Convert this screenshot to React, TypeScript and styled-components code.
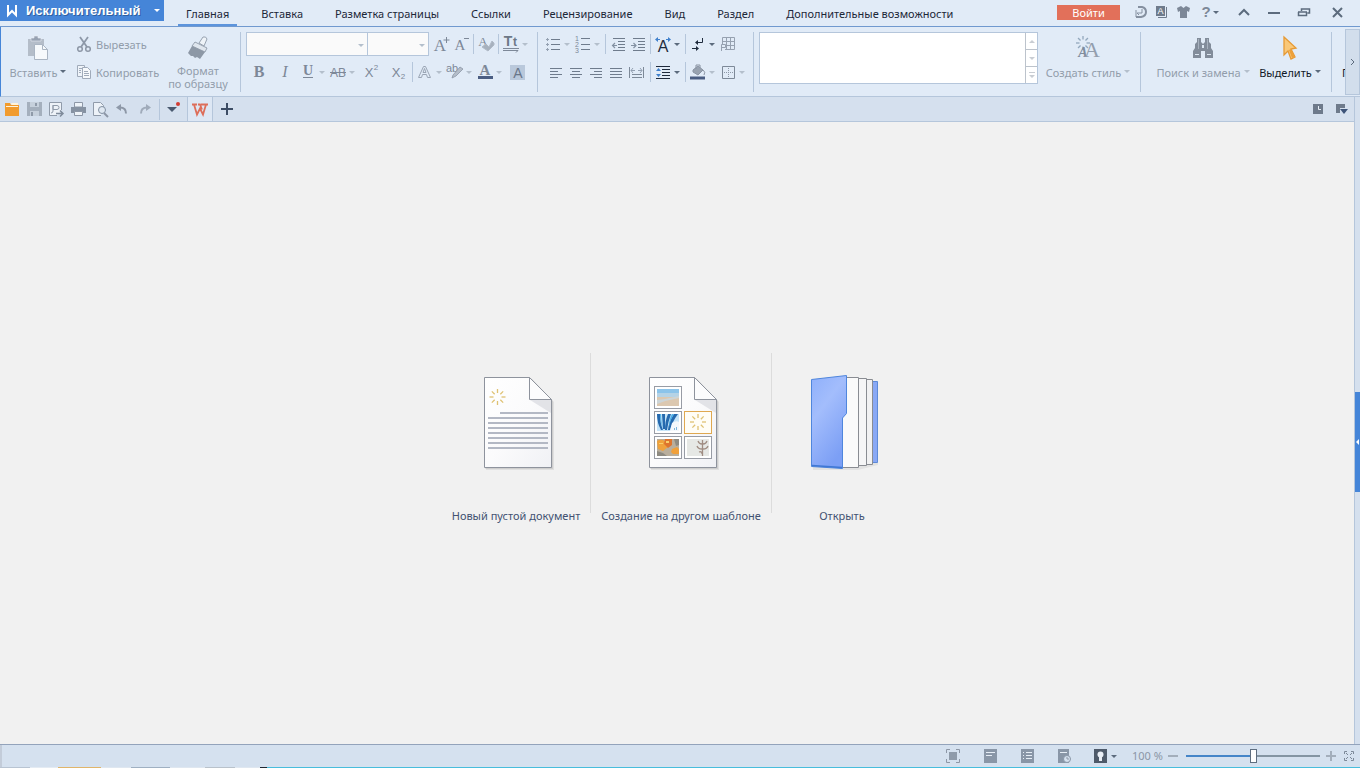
import React from 'react';
import styled, { createGlobalStyle, css } from 'styled-components';

const GlobalStyle = createGlobalStyle`
  *, *::before, *::after { box-sizing: border-box; }
  body { margin: 0; background: #f1f1f1; }
  body, button, input, select {
    font-family: 'Noto Sans', 'Open Sans', sans-serif;
    font-size: 11px;
  }
  button {
    margin: 0;
    padding: 0;
    border: 0;
    background: none;
    color: inherit;
    cursor: pointer;
  }
`;

const muted = '#8d97a6';
const faint = '#b4bfcc';
const dark = '#5c6b7d';
const ink = '#1f2b3d';
const blue = '#4585d8';
const line = '#b5c6db';

const Window = styled.div`
  display: flex;
  flex-direction: column;
  min-height: 100vh;
  overflow: hidden;
`;

const Glyph = styled.svg`
  display: block;
  flex: none;
  overflow: visible;
`;

/* ---------- title bar ---------- */

const TitleBar = styled.header`
  display: flex;
  height: 27px;
  background: #e1ebf7;
  border-bottom: 1px solid #7099cf;
`;

const AppButton = styled.button`
  display: flex;
  align-items: center;
  width: 164px;
  height: 21px;
  padding: 0 4px 0 6px;
  background: ${blue};
  color: #fff;
  font-family: 'Liberation Sans', Arial, sans-serif;
  font-size: 13px;
  font-weight: bold;
  text-shadow: 1px 1px 0 #2f5f9f;
`;

const AppName = styled.span`
  flex: 1;
  padding-left: 8px;
  text-align: left;
`;

const Tabs = styled.nav`
  display: flex;
  gap: 16px;
  margin-left: 14px;
`;

const Tab = styled.button<{ $active?: boolean }>`
  height: 26px;
  padding: 2px 8px 0;
  color: #1c2738;
  white-space: nowrap;
  border-bottom: 2px solid ${(p) => (p.$active ? '#5c94dc' : 'transparent')};
`;

const TitleTools = styled.div`
  display: flex;
  align-items: center;
  height: 24px;
  margin-left: auto;
  padding-right: 8px;
`;

const SignIn = styled.button`
  width: 63px;
  height: 15px;
  margin-right: 10px;
  background: #e2705a;
  color: #fff;
  line-height: 15px;
`;

const TitleButton = styled.button<{ $w: number }>`
  display: flex;
  align-items: center;
  justify-content: center;
  gap: 3px;
  width: ${(p) => p.$w}px;
  height: 20px;
`;

/* ---------- ribbon ---------- */

const Ribbon = styled.section`
  display: flex;
  height: 70px;
  padding-top: 5px;
  background: #e1ebf7;
  border-left: 1px solid ${blue};
  border-bottom: 1px solid ${line};
`;

const Group = styled.div<{ $w?: number; $left?: number }>`
  display: flex;
  flex: ${(p) => (p.$w ? `0 0 ${p.$w}px` : '1 1 auto')};
  height: 60px;
  padding-left: ${(p) => p.$left ?? 5}px;
  border-right: 1px solid ${line};
`;

const StylesGroup = styled(Group)`
  padding-right: 8px;
`;

const Rows = styled.div`
  display: flex;
  flex-direction: column;
  gap: 4px;
`;

const Row = styled.div<{ $indent?: number }>`
  display: flex;
  align-items: center;
  height: 24px;
  padding-left: ${(p) => p.$indent ?? 0}px;
`;

const ToolButton = styled.button<{ $w: number; $menu?: boolean }>`
  display: flex;
  align-items: center;
  justify-content: center;
  width: ${(p) => p.$w}px;
  height: 22px;
  ${(p) =>
    p.$menu &&
    css`
      justify-content: flex-start;
      gap: 3px;
      padding-left: 2px;
    `}
`;

const Rule = styled.span`
  width: 1px;
  height: 20px;
  margin: 0 2px;
  background: ${line};
`;

const BigButton = styled.button<{ $w: number; $strong?: boolean }>`
  display: flex;
  flex-direction: column;
  align-items: center;
  flex: none;
  width: ${(p) => p.$w}px;
  padding-top: 2px;
  color: ${(p) => (p.$strong ? '#111a28' : '#929dab')};
  line-height: 13px;
`;

const BigIcon = styled.span<{ $tight?: boolean }>`
  display: flex;
  align-items: center;
  height: 28px;
  margin-bottom: ${(p) => (p.$tight ? 2 : 4)}px;
`;

const BigLabel = styled.span`
  display: flex;
  align-items: center;
  gap: 3px;
  white-space: nowrap;
  svg { margin-bottom: 3px; }
`;

const ClipColumn = styled(Rows)`
  width: 91px;
  padding-left: 8px;
`;

const ClipButton = styled.button`
  display: flex;
  align-items: center;
  gap: 4px;
  height: 24px;
  color: #929dab;
`;

const Combo = styled.label<{ $w: number }>`
  position: relative;
  display: block;
  width: ${(p) => p.$w}px;
  height: 24px;
  & + & { margin-left: -1px; }
  & > svg {
    position: absolute;
    right: 4px;
    top: 12px;
    pointer-events: none;
  }
`;

const ComboField = styled.select`
  display: block;
  width: 100%;
  height: 24px;
  appearance: none;
  background: #fafafa;
  border: 1px solid ${line};
  border-radius: 0;
`;

const Combos = styled.div`
  display: flex;
  margin-right: 2px;
`;

const Gallery = styled.div`
  display: flex;
  flex: 1;
  height: 52px;
  margin-right: 6px;
  background: #fff;
  border: 1px solid ${line};
`;

const GalleryScroll = styled.div`
  display: flex;
  flex-direction: column;
  width: 12px;
  margin-left: auto;
  border-left: 1px solid #bcc3cc;
`;

const GalleryButton = styled.button`
  display: flex;
  flex: 1;
  align-items: center;
  justify-content: center;
  & + & { border-top: 1px solid #bcc3cc; }
`;

const Clipped = styled.div`
  flex: 0 0 13px;
  padding: 34px 0 0 10px;
  overflow: hidden;
  color: #111a28;
  line-height: 13px;
`;

const RibbonScroll = styled.button`
  flex: 0 0 15px;
  height: 66px;
  margin-top: -3px;
  display: flex;
  align-items: center;
  justify-content: center;
  background: #d2deec;
  border: 1px solid ${line};
`;

/* ---------- quick access ---------- */

const Body = styled.div`
  display: flex;
  flex: 1;
`;

const Content = styled.div`
  display: flex;
  flex: 1;
  flex-direction: column;
`;

const QuickBar = styled.div`
  display: flex;
  align-items: center;
  height: 25px;
  padding-left: 1px;
  background: #d5e0ee;
  border-bottom: 1px solid ${line};
`;

const QuickButton = styled.button<{ $w?: number; $tab?: boolean }>`
  display: flex;
  align-items: center;
  justify-content: center;
  width: ${(p) => p.$w ?? 22}px;
  height: 24px;
  ${(p) =>
    p.$tab &&
    css`
      background: #dde7f4;
      border: solid ${line};
      border-width: 0 1px;
    `}
`;

const QuickRule = styled.span`
  width: 1px;
  height: 21px;
  margin-left: 2px;
  background: ${line};
`;

const QuickEnd = styled.div`
  display: flex;
  margin-left: auto;
`;

/* ---------- start area ---------- */

const Workspace = styled.main`
  display: flex;
  flex: 1;
  align-items: center;
  justify-content: center;
  padding-top: 14px;
  background: #f1f1f1;
`;

const Start = styled.div`
  display: flex;
  align-items: flex-start;
`;

const Divider = styled.span`
  width: 1px;
  height: 160px;
  background: #dcdcdc;
`;

const Card = styled.button<{ $w: number }>`
  display: flex;
  flex-direction: column;
  align-items: center;
  gap: 38px;
  width: ${(p) => p.$w}px;
  height: 174px;
  padding-top: 17px;
  color: #435272;
  line-height: 16px;
  white-space: nowrap;
`;

const Rail = styled.aside`
  display: flex;
  flex-direction: column;
  justify-content: center;
  width: 6px;
  padding-top: 43px;
  background: #d5e0ee;
  border-left: 1px solid ${line};
`;

const RailHandle = styled.button`
  display: flex;
  align-items: center;
  justify-content: center;
  width: 5px;
  height: 100px;
  background: ${blue};
`;

/* ---------- status bar ---------- */

const StatusBar = styled.footer`
  display: flex;
  align-items: center;
  height: 23px;
  background: #d5e1ef;
  border-top: 1px solid #93a3bb;
  box-shadow: inset 2px 0 0 #c3ccd9;
`;

const StatusTools = styled.div`
  display: flex;
  align-items: center;
  margin-left: auto;
`;

const StatusButton = styled.button<{ $w: number }>`
  display: flex;
  align-items: center;
  justify-content: center;
  gap: 4px;
  width: ${(p) => p.$w}px;
  height: 20px;
`;

const Percent = styled.output`
  width: 36px;
  padding: 0 0 2px 4px;
  color: #8b96a6;
  white-space: nowrap;
`;

const Zoom = styled.input`
  appearance: none;
  width: 134px;
  height: 14px;
  margin: 0 4px;
  background: linear-gradient(#4585c8, #4585c8) left center / 67px 2px no-repeat,
    linear-gradient(#8495a3, #8495a3) center / 100% 2px no-repeat;
  &::-webkit-slider-thumb {
    appearance: none;
    width: 7px;
    height: 14px;
    background: #fff;
    border: 1px solid #5f6e80;
  }
`;

const Taskbar = styled.div`
  flex: none;
  height: 1px;
  background: linear-gradient(90deg, #b8c4d2 0 30px, #e4ebf3 30px 58px, #e0b56a 58px 101px, #dfe7f0 101px 131px,
    #9fb0c2 131px 170px, #dfe7f0 170px 205px, #b9c2cb 205px 235px, #dfe7f0 235px 260px, #1d2733 260px 267px,
    #48bddc 267px 100%);
`;

/* ---------- drawings ---------- */

const Down = ({ c = faint, w = 6 }: { c?: string; w?: number }) => (
  <Glyph width={w} height="3" viewBox="0 0 6 3"><path d="M0 0h6L3 3z" fill={c} /></Glyph>
);

type IconProps = { children: React.ReactNode; w?: number; h?: number };
const Icon = ({ children, w = 16, h = 16 }: IconProps) => (
  <Glyph width={w} height={h} viewBox={`0 0 ${w} ${h}`} fill="none" stroke={muted}>{children}</Glyph>
);

type LetterProps = { x: number; y: number; s: number; t: string; c?: string; serif?: boolean; bold?: boolean; italic?: boolean };
const Letter = ({ x, y, s, t, c = '#7d8898', serif, bold, italic }: LetterProps) => (
  <text
    x={x}
    y={y}
    fontSize={s}
    fill={c}
    stroke="none"
    textAnchor="middle"
    fontWeight={bold ? 'bold' : 'normal'}
    fontStyle={italic ? 'italic' : 'normal'}
    fontFamily={serif ? "'Liberation Serif', serif" : "'Liberation Sans', sans-serif"}
  >
    {t}
  </text>
);

const Lines = ({ rows, c = '#6f7c8d' }: { rows: number[][]; c?: string }) => (
  <path stroke={c} d={rows.map(([y, a, b]) => `M${a} ${y + 0.5}H${b}`).join('')} />
);

const Spark = ({ x, y, c = '#dfc273', r = 8 }: { x: number; y: number; c?: string; r?: number }) => (
  <g stroke={c} strokeWidth="1.300">
    {[0, 45, 90, 135, 180, 225, 270, 315].map((a) => (
      <path key={a} d={`M${r / 2} 0H${r}`} transform={`translate(${x} ${y}) rotate(${a})`} />
    ))}
  </g>
);

const Sheet = () => (
  <>
    <path d="M20 9h46l22 23v68H20z" fill="#000" opacity=".07" stroke="none" />
    <path d="M19 8h46l22 23v68H19z" fill="#000" opacity=".08" stroke="none" />
    <path d="M18.5 7.500h45l22 22v68h-67z" fill="url(#sheet)" stroke="#8e939d" />
    <path d="M64 30h21v13z" fill="#dcdde2" opacity=".8" stroke="none" />
    <path d="M63.500 7.500v22h22z" fill="#fcfcfd" stroke="#8e939d" />
  </>
);

const Gradients = () => (
  <defs>
    <linearGradient id="sheet" x1="0" y1="0" x2="1" y2="1">
      <stop offset="0" stopColor="#fff" />
      <stop offset=".5" stopColor="#fbfbfc" />
      <stop offset="1" stopColor="#f0f1f5" />
    </linearGradient>
    <linearGradient id="cover" x1="0" y1="0" x2=".5" y2="1">
      <stop offset="0" stopColor="#8fb0fb" />
      <stop offset=".4" stopColor="#a3bdfc" />
      <stop offset="1" stopColor="#7c9ff5" />
    </linearGradient>
  </defs>
);

const BlankDocument = () => (
  <Icon w={100} h={100}>
    <Gradients />
    <Sheet />
    <Spark x={31.5} y={27} />
    <path stroke="#b3b8c4" strokeWidth="2" d="M34 43h48M22 48h60M22 53h60M22 58h60M22 63h60M22 68h60M22 73h60M22 78h60" />
  </Icon>
);

const TemplateDocument = () => (
  <Icon w={100} h={100}>
    <Sheet />
    {[[23, 16], [23, 41], [23, 66], [53, 66]].map(([x, y]) => (
      <rect key={`${x}-${y}`} x={x + 0.5} y={y + 0.5} width="27" height="22" fill="#fff" stroke="#989ca5" />
    ))}
    <rect x="53.500" y="41.500" width="27" height="22" fill="#fffdf6" stroke="#dfa850" />
    <g stroke="none">
      <path d="M26 19h22v6H26z" fill="#8cc4ea" />
      <path d="M26 23h22v5H26z" fill="#b5d3e6" />
      <path d="M26 27h22v9H26z" fill="#dcc8b0" />
      <path d="M26 30q10-1 22-4v2q-12 2-22 6z" fill="#cdd5d7" />
      <path d="M26 44h22v17H26z" fill="#c5e4f8" />
      <path d="M26 44h3q0 9 3 16h-2q-4-7-4-16zM31 44h3v15h-2zM37 44h3q-3 8-4 16h-2q0-9 3-16zM43 44h4q-6 8-8 16h-2q1-9 6-16z" fill="#2569ae" />
      <path d="M29 44h1q0 8 2 14-3-6-3-14zM41 44h2q-4 6-5 13 0-8 3-13z" fill="#4fb1e8" />
      <path d="M41 53q4-3 7-1v9h-9z" fill="#f4f8fb" />
      <path d="M43 58h1v2h-1zM45 57h1v3h-1z" fill="#7fb6dc" />
      <path d="M26 69h22v17H26z" fill="#b9ae9c" />
      <path d="M26 71q5-3 9 1l2 5-5 4-5-2z" fill="#f0a23c" />
      <path d="M34 69h7v6l-4 3-4-4z" fill="#de742d" />
      <path d="M41 79l5-2 2 2v5h-6l-2-2z" fill="#f0a03a" />
      <path d="M43 69h5v6l-3 1zM26 81l6 2 4 3H26z" fill="#8e8b82" />
      <path d="M28 73h4v1h-4zM35 71h3v2h-3z" fill="#f8cf6a" />
      <path d="M56 69h22v17H56z" fill="#e6e8e5" />
    </g>
    <path d="M71.500 70v16M67 71q1 3 4 3M76 71q-1 3-4 3M66 76q1 3 5 3M77 76q-1 3-5 3M68 82q3-1 3 2" stroke="#a08d83" strokeWidth="1.300" />
    <Spark x={67} y={52} />
  </Icon>
);

const OpenFolder = () => (
  <Icon w={100} h={100}>
    <path d="M21 100h45l20-5v-4H21z" fill="#000" opacity=".06" stroke="none" />
    <path d="M78 11.500h7.500v81H78z" fill="#89a8f5" stroke="#5d8ad8" />
    <path d="M72 9.500h8.500v85H72z" fill="#f1f1f2" stroke="#898c92" />
    <path d="M64 8.500h10.500v87H64z" fill="#f5f5f6" stroke="#898c92" />
    <path d="M50 7.500h16.500v90H50z" fill="#fafafa" stroke="#898c92" />
    <path d="M19.500 9.500l35-4v38l-4 4.500v50.500l-31-2z" fill="url(#cover)" stroke="#4f86dd" />
    <path d="M20 95.500l30 2" stroke="#3f78d4" strokeWidth="1.500" />
  </Icon>
);

const Paste = () => (
  <Icon w={22} h={24}>
    <path d="M1 3h16v17H1z" fill="#b4bdc9" stroke="none" />
    <path d="M4 5h10V2h-3V0H7v2H4z" fill="#97a2b2" stroke="#e9eef5" strokeWidth=".6" />
    <path d="M7.500 8.500h8l5 5v10h-13z" fill="#f6f9fc" stroke="#aab5c3" />
    <path d="M15.500 8.500v5h5" stroke="#aab5c3" />
  </Icon>
);

const Scissors = () => (
  <Icon w={16} h={17}>
    <path d="M4 1l7 10M12 1L5 11" stroke="#8d98a8" strokeWidth="1.800" />
    <circle cx="4" cy="13" r="2.300" strokeWidth="1.500" />
    <circle cx="12" cy="13" r="2.300" strokeWidth="1.500" />
  </Icon>
);

const Copy = () => (
  <Icon>
    <path d="M1.500 1.500h7v11h-7z" fill="#eff4fa" stroke="#a0abba" />
    <path d="M6.500 3.500h5l3 3v8h-8z" fill="#f6f9fc" stroke="#a0abba" />
    <path d="M3 4.500h3M3 6.500h2M3 8.500h2M8 7.500h4M8 9.500h5M8 11.500h5" stroke="#a0abba" />
  </Icon>
);

const Brush = () => (
  <Icon w={22} h={24}>
    <path d="M12 7l4-6q3-1 4 2l-3 7z" fill="#eef3f8" stroke="#97a2b0" />
    <path d="M8 6l12 6-2 4L5 10z" fill="#dfe6ee" stroke="#97a2b0" />
    <path d="M5 10l13 6-5 7-3-2-2 1-2-2-2 0-3-3z" fill="#8d98a6" stroke="none" />
  </Icon>
);

const NewStyle = () => (
  <Icon w={24} h={24}>
    <Spark x={7} y={7} c="#93a8bd" r={7} />
    <Letter x={7} y={21} s={14} t="A" serif bold italic c="#7f8c9d" />
    <Letter x={16} y={21} s={22} t="A" serif c="#939eae" />
  </Icon>
);

const Binoculars = () => (
  <Icon w={22} h={22}>
    <g fill="#828c9a" stroke="none">
      <path d="M5 1h4v4l2 2 2-2V1h4v4l2 2v4l2 3v7h-8v-7H9v7H1v-7l2-3V7l2-2z" />
      <path d="M10 8h2v3h-2zM3 17h4v1H3zM15 17h4v1h-4z" fill="#dce6f1" />
      <path d="M6 2h1v10H6zM15 2h1v10h-1z" fill="#a7b1be" />
    </g>
  </Icon>
);

const Cursor = () => (
  <Icon w={16} h={24}>
    <path d="M2 1l12 11-5 1 4 8-4 2-3-8-4 4z" fill="#f9c879" stroke="#e69a35" strokeWidth="1.300" />
    <path d="M9 13l4 8-3 1-3-8z" fill="#eda03a" stroke="none" />
  </Icon>
);

const Align = ({ kind }: { kind: 'left' | 'center' | 'right' | 'justify' }) => {
  const rows = {
    left: [[4, 2, 14], [7, 2, 10], [10, 2, 14], [13, 2, 10]],
    center: [[4, 2, 14], [7, 4, 12], [10, 2, 14], [13, 4, 12]],
    right: [[4, 2, 14], [7, 6, 14], [10, 2, 14], [13, 6, 14]],
    justify: [[4, 2, 14], [7, 2, 14], [10, 2, 14], [13, 2, 14]],
  }[kind];
  return <Icon><Lines rows={rows} /></Icon>;
};

const Indent = ({ out }: { out?: boolean }) => (
  <Icon>
    <Lines rows={[[2, 3, 15], [5, 8, 15], [8, 8, 15], [11, 8, 15], [14, 3, 15]]} />
    <path d={out ? 'M7 9.500H2M5 7L2.500 9.500 5 12' : 'M1 9.500h5M3.500 7L6 9.500 3.500 12'} stroke="#8391a3" strokeWidth="1.200" />
  </Icon>
);

/* ---------- page ---------- */

const TABS = ['Главная', 'Вставка', 'Разметка страницы', 'Ссылки', 'Рецензирование', 'Вид', 'Раздел', 'Дополнительные возможности'];

const Tool = ({ label, w = 20, menu, children }: { label: string; w?: number; menu?: string; children: React.ReactNode }) => (
  <ToolButton aria-label={label} $w={menu ? 30 : w} $menu={!!menu}>
    {children}
    {menu && <Down c={menu} />}
  </ToolButton>
);

const FontGroup = () => (
  <Group $w={297}>
    <Rows>
      <Row>
        <Combos>
          <Combo $w={122}><ComboField aria-label="Шрифт" /><Down /></Combo>
          <Combo $w={62}><ComboField aria-label="Размер шрифта" /><Down /></Combo>
        </Combos>
        <Tool label="Увеличить шрифт">
          <Icon><Letter x={7} y={15} s={17} t="A" serif /><path d="M13.500 1v6M10.500 4h6" stroke="#7d8898" /></Icon>
        </Tool>
        <Tool label="Уменьшить шрифт">
          <Icon><Letter x={7} y={14} s={15} t="A" serif /><path d="M11 2.500h5" stroke="#7d8898" /></Icon>
        </Tool>
        <Rule />
        <Tool label="Очистить формат">
          <Icon>
            <Letter x={5} y={10} s={13} t="A" serif />
            <path d="M4 11l4-3 3 3 3-6 2 2v2l-6 6z" fill="#a7b1be" stroke="#b0bac7" />
          </Icon>
        </Tool>
        <Rule />
        <Tool label="Регистр" menu={faint}>
          <Icon>
            <Letter x={5} y={10} s={14} t="T" bold c="#6d7887" />
            <Letter x={12} y={10} s={12} t="t" bold c="#6d7887" />
            <path d="M0 12.500h16M0 14.500h15l-2 2" stroke="#7d8898" />
          </Icon>
        </Tool>
      </Row>
      <Row>
        <Tool label="Полужирный" w={26}><Icon><Letter x={8} y={13} s={16} t="B" serif bold /></Icon></Tool>
        <Tool label="Курсив" w={26}><Icon><Letter x={8} y={13} s={16} t="I" serif italic /></Icon></Tool>
        <Tool label="Подчёркнутый" menu={faint}>
          <Icon><Letter x={8} y={11} s={14} t="U" serif bold /><path d="M3 13.500h10" stroke="#7d8898" /></Icon>
        </Tool>
        <Tool label="Зачёркнутый" menu={faint}>
          <Icon><Letter x={8} y={13} s={12} t="AB" /><path d="M0 8.500h16" stroke="#7d8898" /></Icon>
        </Tool>
        <Tool label="Надстрочный" w={26}>
          <Icon><Letter x={6} y={13} s={13} t="X" /><Letter x={13} y={6} s={8} t="2" /></Icon>
        </Tool>
        <Tool label="Подстрочный" w={26}>
          <Icon><Letter x={7} y={13} s={13} t="X" /><Letter x={14} y={15} s={8} t="2" /></Icon>
        </Tool>
        <Rule />
        <Tool label="Эффекты" menu={faint}>
          <Icon>
            <path d="M1.500 13.500l5-11h2l5 11h-3l-1-3h-4l-1 3zM6 8.500h3l-1.500-4z" stroke="#9aa5b4" />
          </Icon>
        </Tool>
        <Tool label="Цвет выделения" menu={faint}>
          <Icon>
            <Letter x={5} y={8} s={11} t="ab" />
            <path d="M6 11l7-8 3 2-7 7-4 2z" fill="#b4bdc9" stroke="#8d97a6" strokeWidth=".8" />
          </Icon>
        </Tool>
        <Tool label="Цвет текста" menu={faint}>
          <Icon><Letter x={8} y={11} s={15} t="A" serif bold /><path d="M1 13.500h15" stroke="#4a5d82" strokeWidth="3" /></Icon>
        </Tool>
        <Tool label="Заливка текста" w={26}>
          <Icon><path d="M0 1h15v15H0z" fill="#b9c8db" stroke="none" /><Letter x={8} y={14} s={14} t="A" c="#697689" /></Icon>
        </Tool>
      </Row>
    </Rows>
  </Group>
);

const ParagraphGroup = () => (
  <Group $w={216}>
    <Rows>
      <Row>
        <Tool label="Маркеры" menu={faint}>
          <Icon>
            <Lines rows={[[3, 6, 15], [8, 6, 15], [13, 6, 15]]} />
            <path d="M1 3.500h3M1 8.500h3M1 13.500h3M2.500 2v3M2.500 7v3M2.500 12v3" stroke="#94a1b2" />
          </Icon>
        </Tool>
        <Tool label="Нумерация" menu={faint}>
          <Icon>
            <Lines rows={[[2, 6, 15], [8, 6, 15], [13, 6, 15]]} />
            <Letter x={2} y={5} s={7} t="1" /><Letter x={2} y={11} s={7} t="2" /><Letter x={2} y={17} s={7} t="3" />
          </Icon>
        </Tool>
        <Rule />
        <Tool label="Уменьшить отступ"><Indent out /></Tool>
        <Tool label="Увеличить отступ"><Indent /></Tool>
        <Rule />
        <Tool label="Масштаб знаков" menu={dark}>
          <Icon>
            <Letter x={8} y={16} s={16} t="A" c={ink} />
            <path d="M1 3.500h4M11 3.500h4" stroke="#3f80cc" />
            <path d="M0 3.500L3 1v5zM16 3.500L13 1v5z" fill="#3f80cc" stroke="none" />
          </Icon>
        </Tool>
        <Rule />
        <Tool label="Знаки абзаца" menu={dark}>
          <Icon>
            <path d="M12.500 2v4.500H7M2 12.500h5" stroke={ink} />
            <path d="M5 6.500L8 4v5zM9 12.500L6 10v5z" fill={ink} stroke="none" />
          </Icon>
        </Tool>
        <Tool label="Таблица">
          <Icon>
            <path d="M2.500 1.500h12v12h-12zM6.500 1v12M10.500 1v12M2 5.500h12M2 9.500h12" stroke="#96a1b0" />
            <path d="M0 8h5v7H0z" fill="#e1ebf7" stroke="none" /><path d="M1.500 15V8.500h4v3h-4" stroke="#96a1b0" />
          </Icon>
        </Tool>
      </Row>
      <Row $indent={3}>
        <Tool label="По левому краю"><Align kind="left" /></Tool>
        <Tool label="По центру"><Align kind="center" /></Tool>
        <Tool label="По правому краю"><Align kind="right" /></Tool>
        <Tool label="По ширине"><Align kind="justify" /></Tool>
        <Tool label="Распределить" w={22}>
          <Icon>
            <path d="M.5 3v11M14.500 3v11M3 10.500h10M3 13.500h10" stroke="#7d8998" />
            <path d="M2 6.500h4M9 6.500h4M4 4L2 6.500 4 9M11 4l2 2.500L11 9" stroke="#94a1b2" />
          </Icon>
        </Tool>
        <Rule />
        <Tool label="Интервал" menu={dark}>
          <Icon>
            <Lines c={ink} rows={[[2, 1, 15], [5, 7, 15], [8, 7, 15], [11, 7, 15], [14, 1, 15]]} />
            <path d="M3.500 4L1 7h5zM3.500 13L1 10h5z" fill="#3f80cc" stroke="none" />
          </Icon>
        </Tool>
        <Rule />
        <Tool label="Заливка" menu={faint}>
          <Icon>
            <path d="M3 6l5-4 5 4-5 5-5-3z" fill="#98a2b0" stroke="#8a94a3" />
            <path d="M6 5V1h4v3M13 6q3 2 1 5" stroke="#8a94a3" /><path d="M0 14h15" stroke="#4a5d82" strokeWidth="3" />
          </Icon>
        </Tool>
        <Tool label="Границы" menu={faint}>
          <Icon>
            <path d="M2.500 2.500h12v12h-12z" stroke="#7d8998" />
            <path d="M8.500 4v10M4 8.500h10" stroke="#8d97a6" strokeDasharray="1 1" />
          </Icon>
        </Tool>
      </Row>
    </Rows>
  </Group>
);

export default function App() {
  return (
    <Window>
      <GlobalStyle />
      <TitleBar>
        <AppButton>
          <Glyph width="12" height="12" viewBox="0 0 12 12" fill="none" stroke="#fff" strokeWidth="2">
            <path d="M2 0v10l4-4 4 4V0" />
          </Glyph>
          <AppName>Исключительный</AppName>
          <Down c="#fff" />
        </AppButton>
        <Tabs>
          {TABS.map((name, i) => <Tab key={name} $active={i === 0}>{name}</Tab>)}
        </Tabs>
        <TitleTools>
          <SignIn>Войти</SignIn>
          <TitleButton $w={22} aria-label="Облако">
            <Icon w={14} h={14}>
              <path d="M4 2h4q4 1 4 5t-5 5H2" strokeWidth="2" stroke="#8590a0" /><path d="M8 4v4H3l2 2M2 5v7" stroke="#8590a0" />
            </Icon>
          </TitleButton>
          <TitleButton $w={20} aria-label="Документы">
            <Icon w={12} h={12}>
              <path d="M0 0h9v10H0z" fill="#6f7b8c" stroke="none" /><path d="M10.500 1v10.500H2" stroke="#6f7b8c" />
              <Letter x={4.5} y={8} s={9} t="A" c="#fff" />
            </Icon>
          </TitleButton>
          <TitleButton $w={22} aria-label="Оформление">
            <Icon w={13} h={12}><path d="M4 0l2.500 2L9 0l4 2-1 4-2-1v7H3V5L1 6 0 2z" fill="#7c8797" stroke="none" /></Icon>
          </TitleButton>
          <TitleButton $w={32} aria-label="Справка">
            <Icon w={8} h={14}><Letter x={4} y={12} s={15} t="?" bold /></Icon><Down c={dark} />
          </TitleButton>
          <TitleButton $w={36} aria-label="Свернуть ленту">
            <Icon w={12} h={8}><path d="M1 7l5-5 5 5" stroke={dark} strokeWidth="2" /></Icon>
          </TitleButton>
          <TitleButton $w={24} aria-label="Свернуть">
            <Icon w={12} h={4}><path d="M0 3h12" stroke={dark} strokeWidth="2" /></Icon>
          </TitleButton>
          <TitleButton $w={36} aria-label="Восстановить">
            <Icon w={12} h={8}><path d="M3.500 3V1h8v4h-2M0 4h9M.5 4v3.500h8V4" stroke={dark} strokeWidth="1.500" /></Icon>
          </TitleButton>
          <TitleButton $w={30} aria-label="Закрыть">
            <Icon w={11} h={9}><path d="M1 0l9 9M10 0L1 9" stroke={dark} strokeWidth="2" /></Icon>
          </TitleButton>
        </TitleTools>
      </TitleBar>

      <Ribbon>
        <Group $w={240} $left={7}>
          <BigButton $w={60}>
            <BigIcon><Paste /></BigIcon>
            <BigLabel>Вставить<Down c={dark} /></BigLabel>
          </BigButton>
          <ClipColumn>
            <ClipButton><Scissors />Вырезать</ClipButton>
            <ClipButton><Copy />Копировать</ClipButton>
          </ClipColumn>
          <BigButton $w={78}>
            <BigIcon $tight><Brush /></BigIcon>
            <span>Формат<br />по образцу</span>
          </BigButton>
        </Group>
        <FontGroup />
        <ParagraphGroup />
        <StylesGroup>
          <Gallery>
            <GalleryScroll>
              <GalleryButton aria-label="Вверх">
                <Glyph width="6" height="3" viewBox="0 0 6 3"><path d="M0 3h6L3 0z" fill="#c9cdd3" /></Glyph>
              </GalleryButton>
              <GalleryButton aria-label="Вниз"><Down c="#c9cdd3" /></GalleryButton>
              <GalleryButton aria-label="Ещё">
                <Glyph width="6" height="7" viewBox="0 0 6 7" fill="#c9cdd3"><path d="M0 0h6v1H0zM0 3h6L3 6z" /></Glyph>
              </GalleryButton>
            </GalleryScroll>
          </Gallery>
          <BigButton $w={88}>
            <BigIcon><NewStyle /></BigIcon>
            <BigLabel>Создать стиль<Down /></BigLabel>
          </BigButton>
        </StylesGroup>
        <Group $w={191} $left={14}>
          <BigButton $w={96}>
            <BigIcon><Binoculars /></BigIcon>
            <BigLabel>Поиск и замена<Down /></BigLabel>
          </BigButton>
          <BigButton $w={78} $strong>
            <BigIcon><Cursor /></BigIcon>
            <BigLabel>Выделить<Down c={dark} /></BigLabel>
          </BigButton>
        </Group>
        <Clipped>П</Clipped>
        <RibbonScroll aria-label="Прокрутить ленту">
          <Icon w={5} h={8}><path d="M1 1l3 3-3 3" stroke={dark} /></Icon>
        </RibbonScroll>
      </Ribbon>

      <Body>
        <Content>
          <QuickBar>
            <QuickButton aria-label="Открыть">
              <Icon><path d="M1 2h5l1 2h8v11H1z" fill="#f19b2e" stroke="none" /><path d="M7 2h7v2H8zM2 5h12v1H2z" fill="#fff3dc" stroke="none" /></Icon>
            </QuickButton>
            <QuickButton aria-label="Сохранить">
              <Icon><path d="M1 1h15v14H1z" fill="#a4afbd" stroke="none" /><path d="M4 1h9v5H4zM4 10h9v5H4z" fill="#c6d0dc" stroke="none" /><path d="M9 2h2v3H9zM5 11h2v4H5z" fill="#8f9aa9" stroke="none" /></Icon>
            </QuickButton>
            <QuickButton aria-label="Экспорт">
              <Icon><path d="M9 14.500H1.500v-13h12V9" fill="#edf2f8" stroke="#909baa" /><path d="M5 4.500h4q2 0 2 2t-2 2H5zM5 4v6q0 2-2 2" stroke="#909baa" /><path d="M8 12.500h7M12 9.500l3 3-3 3" stroke="#7f8b9b" strokeWidth="1.500" /></Icon>
            </QuickButton>
            <QuickButton aria-label="Печать">
              <Icon><path d="M4.500 1.500h8V6h-8z" fill="#eef3f8" /><path d="M1 6h15v6H1z" fill="#8692a2" stroke="none" /><path d="M4.500 10.500h8v4h-8z" fill="#eef3f8" /></Icon>
            </QuickButton>
            <QuickButton aria-label="Просмотр">
              <Icon><path d="M9 14.500H1.500v-13h7l3 3V6" fill="#edf2f8" stroke="#909baa" /><circle cx="10" cy="9" r="3.500" fill="#dfe8f2" stroke="#8290a2" /><path d="M12 12l4 4" strokeWidth="2" /></Icon>
            </QuickButton>
            <QuickButton aria-label="Отменить">
              <Icon w={12} h={12}><path d="M0 4.500L5 1v7z" fill="#8e99a9" stroke="none" /><path d="M4 4.500q6 0 6 6" strokeWidth="2" /></Icon>
            </QuickButton>
            <QuickButton $w={24} aria-label="Повторить">
              <Icon w={12} h={12}><path d="M12 4.500L7 1v7z" fill="#a0abba" stroke="none" /><path d="M8 4.500q-6 0-6 6" stroke="#a0abba" strokeWidth="2" /></Icon>
            </QuickButton>
            <QuickRule />
            <QuickButton $w={27} aria-label="Настройка панели">
              <Icon w={14} h={12}><path d="M0 4h10L5 9z" fill="#4a5a70" stroke="none" /><circle cx="11" cy="1" r="2" fill="#d33c32" stroke="none" /></Icon>
            </QuickButton>
            <QuickButton $w={26} $tab aria-label="WPS">
              <Icon w={16} h={12}><path d="M0 1.500h5M9 1.500h7M2 1.500l3 10 3-6 3 6 3-10M6 1.500h2l2 5" stroke="#dd6e5a" strokeWidth="1.800" /></Icon>
            </QuickButton>
            <QuickButton $w={28} aria-label="Новая вкладка">
              <Icon w={12} h={12}><path d="M6 0v12M0 6h12" stroke="#3d4d65" strokeWidth="2" /></Icon>
            </QuickButton>
            <QuickEnd>
              <QuickButton $w={24} aria-label="Недавние">
                <Icon w={10} h={10}><path d="M0 0h10v10H0z" fill="#6e7a8b" stroke="none" /><path d="M5.500 2v3.500H8" stroke="#e6edf5" /></Icon>
              </QuickButton>
              <QuickButton $w={24} aria-label="Список окон">
                <Icon w={12} h={10}><path d="M0 0h9v4H4v5H0z" fill="#6e7a8b" stroke="none" /><path d="M4 5h8L8 10z" fill="#3e5479" stroke="none" /></Icon>
              </QuickButton>
            </QuickEnd>
          </QuickBar>
          <Workspace>
            <Start>
              <Card $w={148}><BlankDocument />Новый пустой документ</Card>
              <Divider />
              <Card $w={180}><TemplateDocument />Создание на другом шаблоне</Card>
              <Divider />
              <Card $w={140}><OpenFolder />Открыть</Card>
            </Start>
          </Workspace>
        </Content>
        <Rail>
          <RailHandle aria-label="Открыть панель">
            <Glyph width="3" height="6" viewBox="0 0 3 6"><path d="M3 0v6L0 3z" fill="#fff" /></Glyph>
          </RailHandle>
        </Rail>
      </Body>

      <StatusBar>
        <StatusTools>
          <StatusButton $w={38} aria-label="Во весь экран">
            <Icon w={14} h={14}><path d="M3 3h8v8H3z" fill="#8f9baa" stroke="none" /><path d="M.5 4V.5H4M10 .5h3.500V4M13.500 10v3.500H10M4 13.500H.5V10" /></Icon>
          </StatusButton>
          <StatusButton $w={37} aria-label="Разметка страницы">
            <Icon w={13} h={14}><path d="M0 0h13v14H0z" fill="#8996a7" stroke="none" /><path d="M2 3.500h9M2 6.500h6" stroke="#e6edf5" /></Icon>
          </StatusButton>
          <StatusButton $w={37} aria-label="Структура">
            <Icon w={13} h={14}><path d="M0 0h13v14H0z" fill="#8996a7" stroke="none" /><path d="M2 3.500h1M5 3.500h6M2 6.500h1M5 6.500h6M2 9.500h1M5 9.500h6" stroke="#e6edf5" /></Icon>
          </StatusButton>
          <StatusButton $w={37} aria-label="Веб-документ">
            <Icon w={13} h={14}><path d="M0 0h11v14H0z" fill="#8996a7" stroke="none" /><path d="M2 3.500h7" stroke="#e6edf5" /><circle cx="9" cy="10" r="3.500" fill="#d5e1ef" stroke="#8996a7" /><path d="M9 8v2h2" /></Icon>
          </StatusButton>
          <StatusButton $w={45} aria-label="Режим защиты глаз">
            <Icon w={13} h={14}><path d="M0 0h13v14H0z" fill="#4e5a6a" stroke="none" /><circle cx="6.500" cy="5.500" r="3" fill="#e9eef5" stroke="none" /><path d="M5 8h3v4H5z" fill="#e9eef5" stroke="none" /></Icon>
            <Down c={dark} />
          </StatusButton>
          <Percent>100 %</Percent>
          <StatusButton $w={18} aria-label="Уменьшить"><Icon w={10} h={10}><path d="M0 5h10" stroke="#a3aebb" strokeWidth="2" /></Icon></StatusButton>
          <Zoom type="range" min={0} max={100} defaultValue={50} aria-label="Масштаб" />
          <StatusButton $w={14} aria-label="Увеличить"><Icon w={10} h={10}><path d="M0 5h10M5 0v10" stroke="#a3aebb" strokeWidth="2" /></Icon></StatusButton>
          <StatusButton $w={22} aria-label="По размеру окна">
            <Icon w={10} h={10}><path d="M.5 3V.5H3M7 .5h2.500V3M9.500 7v2.500H7M3 9.500H.5V7M2 2l2 2M8 2L6 4M2 8l2-2M8 8L6 6" stroke="#7d8998" /></Icon>
          </StatusButton>
        </StatusTools>
      </StatusBar>
      <Taskbar />
    </Window>
  );
}
